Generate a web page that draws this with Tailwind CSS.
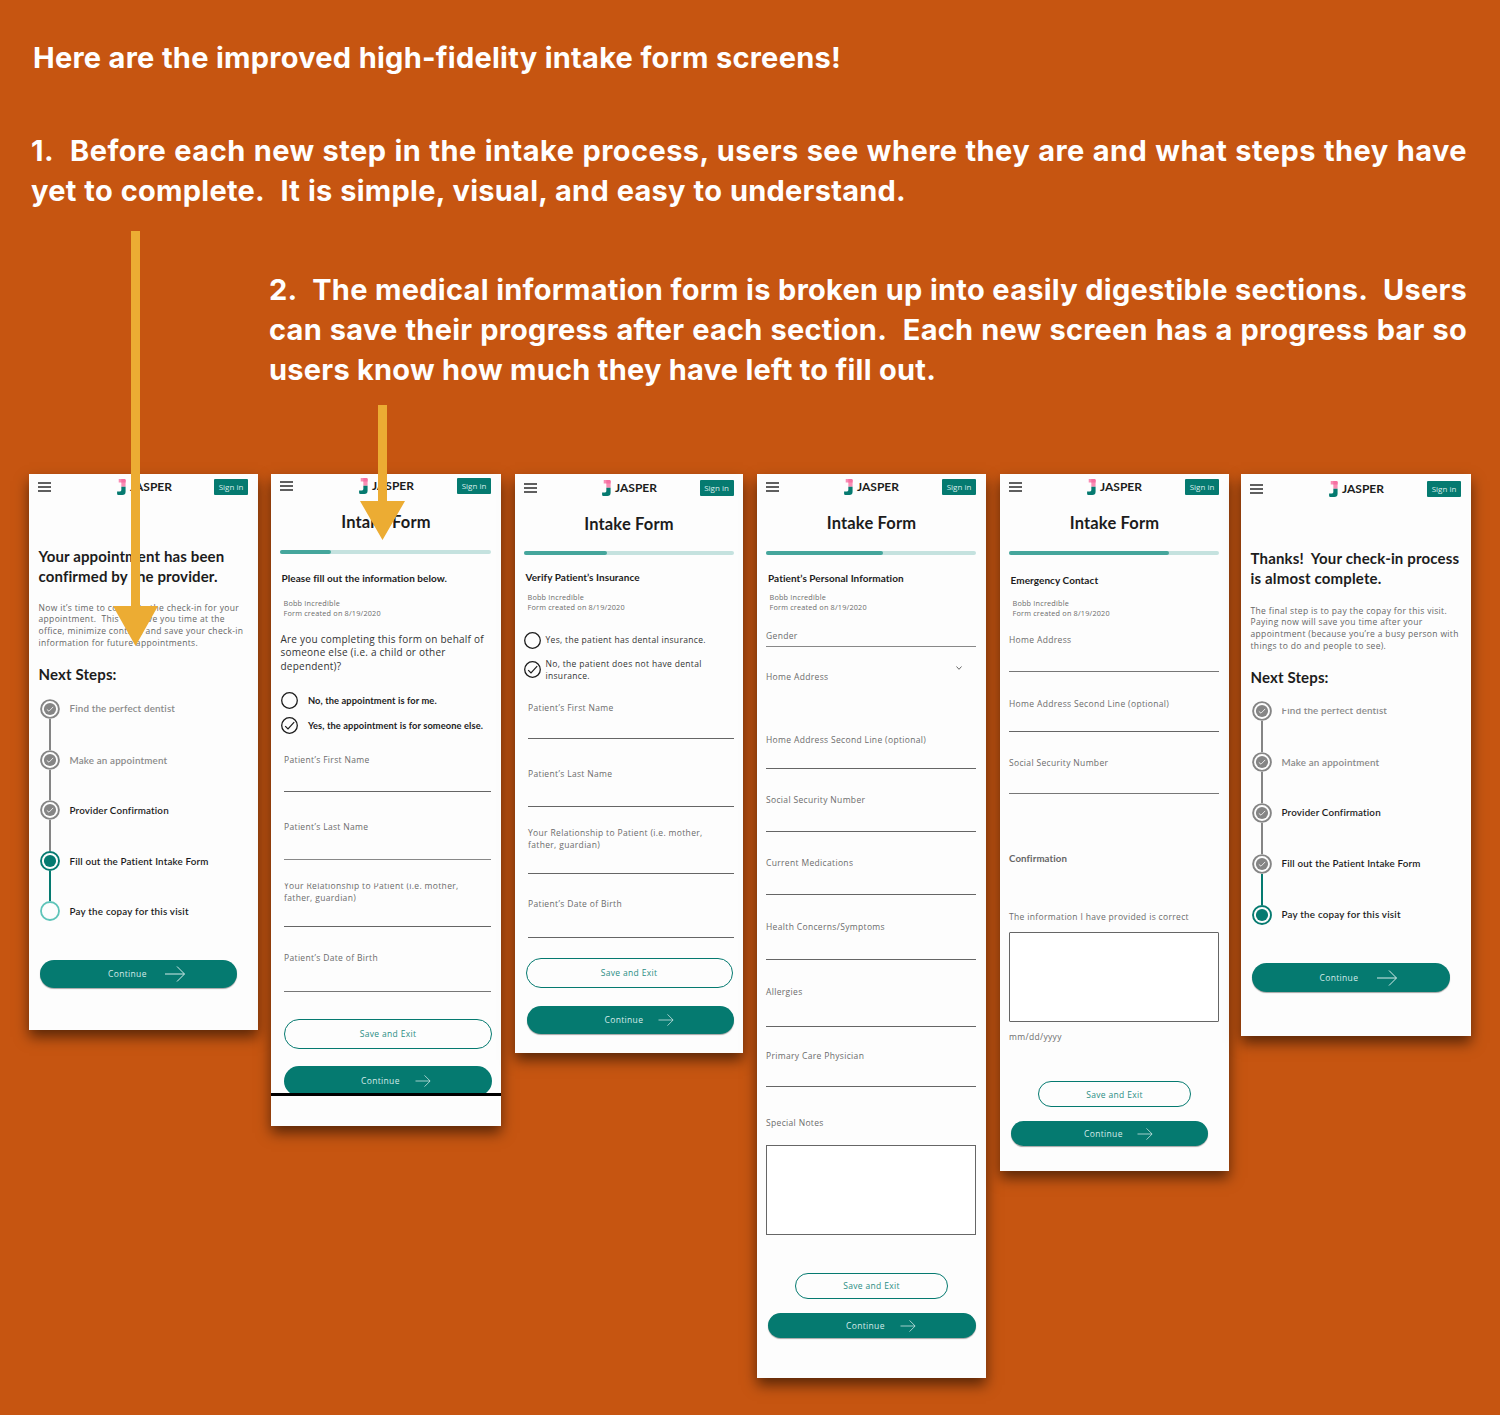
<!DOCTYPE html>
<html lang="en">
<head>
<meta charset="utf-8">
<title>Intake form screens</title>
<script src="https://cdn.jsdelivr.net/npm/@tailwindcss/browser@4"></script>
</head>
<body class="bg-[#c65511]">
<svg class="hidden">
  <symbol id="menu" viewBox="0 0 13 10"><path d="M0 1h13M0 5h13M0 9h13" stroke="#2b2b2b" stroke-width="1.3"/></symbol>
  <symbol id="logo" viewBox="0 0 27 49">
    <path d="M5 0H22Q26 0 26 4V24H13V11H5Z" fill="#f98db4"/><path d="M13 0H22Q26 0 26 4V11H13Z" fill="#f670a2"/>
    <path d="M13 24H26V39Q26 49 16 49H4Q0 49 0 45V38H9Q13 38 13 34Z" fill="#057a70"/>
  </symbol>
  <symbol id="arrow" viewBox="0 0 20 16"><path d="M0 8H19.3M12 .5L19.5 8L12 15.5" fill="none" stroke="#d5ebe9" stroke-width="1"/></symbol>
  <symbol id="radio" viewBox="0 0 17 17"><circle cx="8.5" cy="8.5" r="7.8" fill="none" stroke="#1c1c1c" stroke-width="1.3"/></symbol>
  <symbol id="radio-on" viewBox="0 0 17 17"><circle cx="8.5" cy="8.5" r="7.8" fill="none" stroke="#1c1c1c" stroke-width="1.3"/><path d="M4.2 9.2L7 12L13.2 5.2" fill="none" stroke="#1c1c1c" stroke-width="1.2"/></symbol>
  <symbol id="step-done" viewBox="0 0 20 20"><circle cx="10" cy="10" r="8.9" fill="#fdfdfd" stroke="#858585" stroke-width="1.9"/><circle cx="10" cy="10" r="6.1" fill="#858585"/><path d="M6.8 10.4L9 12.2L13.2 7.9" fill="none" stroke="#e8e8e8" stroke-width="1"/></symbol>
  <symbol id="step-now" viewBox="0 0 20 20"><circle cx="10" cy="10" r="9" fill="#fdfdfd" stroke="#057a70" stroke-width="1.9"/><circle cx="10" cy="10" r="6.1" fill="#057a70"/></symbol>
  <symbol id="step-next" viewBox="0 0 20 20"><circle cx="10" cy="10" r="9" fill="#fdfdfd" stroke="#5ec4b9" stroke-width="1.8"/></symbol>
</svg>

<main class="relative w-[1500px] h-[1415px] overflow-hidden font-['Open_Sans',sans-serif]">
  <section class="h-[474px] pt-[38px] text-white font-['Inter',sans-serif] font-bold text-[29px] leading-[40px] tracking-[0.25px] whitespace-nowrap [text-align-last:justify]">
    <h1 class="ml-[33px] w-[808px]">Here are the improved high-fidelity intake form screens!</h1>
    <div class="ml-[31px] mt-[53px]">
      <p class="w-[1436px] tracking-[0.45px]">1.&nbsp; Before each new step in the intake process, users see where they are and what steps they have</p>
      <p class="w-[875px]">yet to complete.&nbsp; It is simple, visual, and easy to understand.</p>
    </div>
    <div class="ml-[269px] mt-[59px]">
      <p class="w-[1198px]">2.&nbsp; The medical information form is broken up into easily digestible sections.&nbsp; Users</p>
      <p class="w-[1198px]">can save their progress after each section.&nbsp; Each new screen has a progress bar so</p>
      <p class="w-[666px]">users know how much they have left to fill out.</p>
    </div>
  </section>

  <section class="flex items-start pl-[29px]">

    <!-- Appointment confirmed -->
    <article class="w-[229px] h-[556px] bg-[#fdfdfd] shadow-[0_7px_13px_rgba(0,0,0,0.55)] flex flex-col shrink-0">
      <header class="mt-[5px] ml-[9px] mr-[10px] h-4 flex items-center">
        <svg class="w-[13px] h-[10px]"><use href="#menu"/></svg>
        <svg class="w-[9px] h-4 ml-[66px]"><use href="#logo"/></svg>
        <span class="ml-[4px] font-['Lato',sans-serif] font-bold text-[12px] leading-4 text-[#1c1c1c]">JASPER</span>
        <span class="ml-auto w-[34px] h-4 rounded-[1px] bg-[#057a70] text-[8px] leading-4 text-[#d9eeec] text-center">Sign in</span>
      </header>
      <h2 class="mt-[50.5px] ml-[9.5px] h-[41.6px] font-['Lato',sans-serif] font-bold text-[15px] tracking-[0.13px] leading-[20.3px] text-[#1c1c1c] whitespace-pre">Your appointment has been<br>confirmed by the provider.</h2>
      <p class="mt-[14.7px] ml-[9.5px] h-[46.7px] text-[8.5px] leading-[11.67px] tracking-[0.34px] text-[#666] whitespace-pre">Now it’s time to complete the check-in for your<br>appointment.  This will save you time at the<br>office, minimize contact, and save your check-in<br>information for future appointments.</p>
      <h3 class="mt-[16px] ml-[9.5px] h-5 font-['Lato',sans-serif] font-bold text-[15px] tracking-[0.13px] leading-5 text-[#1c1c1c]">Next Steps:</h3>
      <ol class="mt-[14.5px] ml-[10.5px] font-['Lato',sans-serif] font-semibold text-[9.8px] tracking-[0.16px] leading-[21px] text-[#1c1c1c]">
        <li class="flex h-[50.6px] leading-[19px]"><div class="w-5 flex flex-col items-center"><svg class="size-5 shrink-0"><use href="#step-done"/></svg><i class="w-[2px] flex-1 bg-[#858585]"></i></div><span class="ml-[10px] h-5 text-[#8a8a8a] [clip-path:inset(0_0_6.5px_0)]">Find the perfect dentist</span></li>
        <li class="flex h-[50.6px]"><div class="w-5 flex flex-col items-center"><svg class="size-5 shrink-0"><use href="#step-done"/></svg><i class="w-[2px] flex-1 bg-[#858585]"></i></div><span class="ml-[10px] text-[#8a8a8a]">Make an appointment</span></li>
        <li class="flex h-[50.6px]"><div class="w-5 flex flex-col items-center"><svg class="size-5 shrink-0"><use href="#step-done"/></svg><i class="w-[2px] flex-1 bg-[#858585]"></i></div><span class="ml-[10px]">Provider Confirmation</span></li>
        <li class="flex h-[50.6px]"><div class="w-5 flex flex-col items-center"><svg class="size-5 shrink-0"><use href="#step-now"/></svg><i class="w-[2px] flex-1 bg-[#057a70]"></i></div><span class="ml-[10px]">Fill out the Patient Intake Form</span></li>
        <li class="flex h-5 tracking-[0.22px]"><svg class="size-5 shrink-0"><use href="#step-next"/></svg><span class="ml-[10px]">Pay the copay for this visit</span></li>
      </ol>
      <div class="mt-[39px] ml-[11px] w-[197px] h-[28px] rounded-full bg-[#057a70] shadow-[0_1px_1px_rgba(0,0,0,0.35)] flex items-center text-[8.5px] tracking-[0.34px] text-[#d5ebe9]"><span class="ml-[68px]">Continue</span><svg class="w-5 h-4 ml-[18px]"><use href="#arrow"/></svg></div>
    </article>

    <!-- Intake form, part 1 -->
    <article class="ml-[13px] w-[230px] h-[652px] bg-[#fdfdfd] shadow-[0_7px_13px_rgba(0,0,0,0.55)] flex flex-col shrink-0">
      <header class="mt-[4px] ml-[9px] mr-[10px] h-4 flex items-center">
        <svg class="w-[13px] h-[10px]"><use href="#menu"/></svg>
        <svg class="w-[9px] h-4 ml-[66px]"><use href="#logo"/></svg>
        <span class="ml-[4px] font-['Lato',sans-serif] font-bold text-[12px] leading-4 text-[#1c1c1c]">JASPER</span>
        <span class="ml-auto w-[34px] h-4 rounded-[1px] bg-[#057a70] text-[8px] leading-4 text-[#d9eeec] text-center">Sign in</span>
      </header>
      <h2 class="mt-[17.5px] h-5 text-center font-['Lato',sans-serif] font-bold text-[16.5px] tracking-[0.15px] leading-5 text-[#1c1c1c]">Intake Form</h2>
      <div class="mt-[18px] ml-[9px] w-[211px] h-[4.5px] rounded-full bg-[#c5e2df]"><div class="w-[51px] h-full rounded-full bg-[#45a69c]"></div></div>
      <h3 class="mt-[18px] ml-[10.5px] h-3 font-['Lato',sans-serif] font-bold text-[10px] tracking-[0.06px] leading-3 text-[#1c1c1c]">Please fill out the information below.</h3>
      <p class="mt-[14px] ml-[12.5px] h-5 text-[7.3px] leading-[10px] tracking-[0.18px] text-[#6c6c6c]">Bobb Incredible<br>Form created on 8/19/2020</p>
      <p class="mt-[14.5px] ml-[9.5px] h-[40.8px] text-[10px] leading-[13.6px] tracking-[0.23px] text-[#333]">Are you completing this form on behalf of<br>someone else (i.e. a child or other<br>dependent)?</p>
      <div class="mt-[18.5px] ml-[10.3px] h-[17px] flex items-center font-['Lato',sans-serif] font-bold text-[9.3px] tracking-[0.1px] leading-[17px] text-[#1c1c1c]"><svg class="size-[17px] mr-[9.7px]"><use href="#radio"/></svg>No, the appointment is for me.</div>
      <div class="mt-[7.8px] ml-[10.3px] h-[17px] flex items-center font-['Lato',sans-serif] font-bold text-[9.3px] tracking-[0.1px] leading-[17px] text-[#1c1c1c]"><svg class="size-[17px] mr-[9.7px]"><use href="#radio-on"/></svg>Yes, the appointment is for someone else.</div>
      <div class="ml-[13px] mr-[10px] text-[8.5px] leading-[11.6px] tracking-[0.34px] text-[#6c6c6c]">
        <div class="mt-[20.7px] h-[38px] border-b border-[#666]">Patient’s First Name</div>
        <div class="mt-[29px] h-[39px] border-b border-[#888]">Patient’s Last Name</div>
        <div class="mt-[20px] h-[46.5px] border-b border-[#666]"><p class="[clip-path:inset(3px_0_0_0)]">Your Relationship to Patient (i.e. mother,<br>father, guardian)</p></div>
        <div class="mt-[25.5px] h-[40px] border-b border-[#777]">Patient’s Date of Birth</div>
      </div>
      <div class="mt-[26.5px] ml-[13px] w-[208px] h-[30px] shrink-0 rounded-full border-[1.5px] border-[#057a70] text-[8.5px] leading-[28px] tracking-[0.34px] text-[#2b8d84] text-center">Save and Exit</div>
      <div class="mt-[17px] h-[27px] shrink-0 overflow-hidden"><div class="ml-[12.5px] w-[208px] h-[30px] rounded-full bg-[#057a70] flex items-center text-[8.5px] tracking-[0.34px] text-[#d5ebe9]"><span class="ml-[77.5px] pt-[2px]">Continue</span><svg class="w-4 h-[12px] ml-[15px]"><use href="#arrow"/></svg></div></div>
      <div class="h-[3px] shrink-0 bg-black"></div>
    </article>

    <!-- Intake form, part 2 -->
    <article class="ml-[14px] w-[228px] h-[579px] bg-[#fdfdfd] shadow-[0_7px_13px_rgba(0,0,0,0.55)] flex flex-col shrink-0">
      <header class="mt-[6px] ml-[9px] mr-[9.5px] h-4 flex items-center">
        <svg class="w-[13px] h-[10px]"><use href="#menu"/></svg>
        <svg class="w-[9px] h-4 ml-[65px]"><use href="#logo"/></svg>
        <span class="ml-[4px] font-['Lato',sans-serif] font-bold text-[12px] leading-4 text-[#1c1c1c]">JASPER</span>
        <span class="ml-auto w-[34px] h-4 rounded-[1px] bg-[#057a70] text-[8px] leading-4 text-[#d9eeec] text-center">Sign in</span>
      </header>
      <h2 class="mt-[17.5px] h-5 text-center font-['Lato',sans-serif] font-bold text-[16.5px] tracking-[0.15px] leading-5 text-[#1c1c1c]">Intake Form</h2>
      <div class="mt-[17px] ml-[9px] w-[210px] h-[4.5px] rounded-full bg-[#c5e2df]"><div class="w-[83px] h-full rounded-full bg-[#45a69c]"></div></div>
      <h3 class="mt-[15.8px] ml-[10.5px] h-3 font-['Lato',sans-serif] font-bold text-[10px] tracking-[0.06px] leading-3 text-[#1c1c1c]">Verify Patient’s Insurance</h3>
      <p class="mt-[9.5px] ml-[12.5px] h-5 text-[7.3px] leading-[10px] tracking-[0.18px] text-[#6c6c6c]">Bobb Incredible<br>Form created on 8/19/2020</p>
      <div class="mt-[19px] ml-[9px] h-[18px] flex items-center text-[8.5px] leading-[11.7px] tracking-[0.32px] text-[#333]"><svg class="size-[17px] mr-[4.5px]"><use href="#radio"/></svg>Yes, the patient has dental insurance.</div>
      <div class="mt-[8.5px] ml-[9px] h-[24px] flex items-center text-[8.5px] leading-[11.7px] tracking-[0.32px] text-[#333]"><svg class="size-[17px] mr-[4.5px] shrink-0"><use href="#radio-on"/></svg><p>No, the patient does not have dental<br>insurance.</p></div>
      <div class="ml-[13px] mr-[9.5px] text-[8.5px] leading-[11.6px] tracking-[0.34px] text-[#6c6c6c]">
        <div class="mt-[20px] h-[37px] border-b border-[#666]">Patient’s First Name</div>
        <div class="mt-[29.5px] h-[38.5px] border-b border-[#666]">Patient’s Last Name</div>
        <div class="mt-[20.5px] h-[46.5px] border-b border-[#666]">Your Relationship to Patient (i.e. mother,<br>father, guardian)</div>
        <div class="mt-[24.5px] h-[39.5px] border-b border-[#666]">Patient’s Date of Birth</div>
      </div>
      <div class="mt-[20px] ml-[10.5px] w-[207px] h-[30px] shrink-0 rounded-full border-[1.5px] border-[#057a70] text-[8.5px] leading-[28px] tracking-[0.34px] text-[#2b8d84] text-center">Save and Exit</div>
      <div class="mt-[18px] ml-[12px] w-[207px] h-[28px] shrink-0 rounded-full bg-[#057a70] shadow-[0_1px_1px_rgba(0,0,0,0.35)] flex items-center text-[8.5px] tracking-[0.34px] text-[#d5ebe9]"><span class="ml-[77.5px] pt-[2px]">Continue</span><svg class="w-4 h-[12px] ml-[15px]"><use href="#arrow"/></svg></div>
    </article>

    <!-- Intake form, part 3 -->
    <article class="ml-[14px] w-[229px] h-[904px] bg-[#fdfdfd] shadow-[0_7px_13px_rgba(0,0,0,0.55)] flex flex-col shrink-0">
      <header class="mt-[5px] ml-[9px] mr-[10px] h-4 flex items-center">
        <svg class="w-[13px] h-[10px]"><use href="#menu"/></svg>
        <svg class="w-[9px] h-4 ml-[65px]"><use href="#logo"/></svg>
        <span class="ml-[4px] font-['Lato',sans-serif] font-bold text-[12px] leading-4 text-[#1c1c1c]">JASPER</span>
        <span class="ml-auto w-[34px] h-4 rounded-[1px] bg-[#057a70] text-[8px] leading-4 text-[#d9eeec] text-center">Sign in</span>
      </header>
      <h2 class="mt-[18px] h-5 text-center font-['Lato',sans-serif] font-bold text-[16.5px] tracking-[0.15px] leading-[21px] text-[#1c1c1c]">Intake Form</h2>
      <div class="mt-[17.7px] ml-[9px] w-[210px] h-[4.5px] rounded-full bg-[#c5e2df]"><div class="w-[117px] h-full rounded-full bg-[#45a69c]"></div></div>
      <h3 class="mt-[16.8px] ml-[11px] h-3 font-['Lato',sans-serif] font-bold text-[10px] tracking-[0.06px] leading-3 text-[#1c1c1c]">Patient’s Personal Information</h3>
      <p class="mt-[8px] ml-[12.5px] h-5 text-[7.3px] leading-[10px] tracking-[0.18px] text-[#6c6c6c]">Bobb Incredible<br>Form created on 8/19/2020</p>
      <div class="ml-[9px] mr-[10px] text-[8.5px] leading-[11.6px] tracking-[0.34px] text-[#6c6c6c]">
        <div class="mt-[18.2px] h-[16.5px] border-b border-[#888]">Gender</div>
        <div class="mt-[19px] h-1 flex justify-end pr-[14px]"><svg class="w-[6px] h-[4px]" viewBox="0 0 6 4"><path d="M.5 .5L3 3.3L5.5 .5" fill="none" stroke="#666"/></svg></div>
        <div class="mt-[1px] h-[12px]">Home Address</div>
        <div class="mt-[51px] h-[35px] border-b border-[#666]">Home Address Second Line (optional)</div>
        <div class="mt-[25.5px] h-[37.5px] border-b border-[#666]">Social Security Number</div>
        <div class="mt-[25px] h-[38.5px] border-b border-[#666]">Current Medications</div>
        <div class="mt-[25.5px] h-[39.5px] border-b border-[#666]">Health Concerns/Symptoms</div>
        <div class="mt-[25.5px] h-[41px] border-b border-[#666]">Allergies</div>
        <div class="mt-[23px] h-[37.5px] border-b border-[#666]">Primary Care Physician</div>
        <div class="mt-[30px] h-[12px]">Special Notes</div>
        <div class="mt-[16px] h-[90px] border border-[#666] bg-white"></div>
      </div>
      <div class="mt-[38px] ml-[38px] w-[153px] h-[26px] shrink-0 rounded-full border-[1.5px] border-[#057a70] text-[8.5px] leading-[24px] tracking-[0.34px] text-[#2b8d84] text-center">Save and Exit</div>
      <div class="mt-[14px] ml-[11px] w-[208px] h-[25px] shrink-0 rounded-full bg-[#057a70] shadow-[0_1px_1px_rgba(0,0,0,0.35)] flex items-center text-[8.5px] tracking-[0.34px] text-[#d5ebe9]"><span class="ml-[78px] pt-px">Continue</span><svg class="w-4 h-[12px] ml-[15px]"><use href="#arrow"/></svg></div>
    </article>

    <!-- Intake form, part 4 -->
    <article class="ml-[14px] w-[229px] h-[697px] bg-[#fdfdfd] shadow-[0_7px_13px_rgba(0,0,0,0.55)] flex flex-col shrink-0">
      <header class="mt-[5px] ml-[9px] mr-[10px] h-4 flex items-center">
        <svg class="w-[13px] h-[10px]"><use href="#menu"/></svg>
        <svg class="w-[9px] h-4 ml-[65px]"><use href="#logo"/></svg>
        <span class="ml-[4px] font-['Lato',sans-serif] font-bold text-[12px] leading-4 text-[#1c1c1c]">JASPER</span>
        <span class="ml-auto w-[34px] h-4 rounded-[1px] bg-[#057a70] text-[8px] leading-4 text-[#d9eeec] text-center">Sign in</span>
      </header>
      <h2 class="mt-[18px] h-5 text-center font-['Lato',sans-serif] font-bold text-[16.5px] tracking-[0.15px] leading-[21px] text-[#1c1c1c]">Intake Form</h2>
      <div class="mt-[17.7px] ml-[9px] w-[210px] h-[4.5px] rounded-full bg-[#c5e2df]"><div class="w-[160px] h-full rounded-full bg-[#45a69c]"></div></div>
      <h3 class="mt-[19.3px] ml-[10.5px] h-3 font-['Lato',sans-serif] font-bold text-[10px] tracking-[0.06px] leading-3 text-[#1c1c1c]">Emergency Contact</h3>
      <p class="mt-[12px] ml-[12.5px] h-5 text-[7.3px] leading-[10px] tracking-[0.18px] text-[#6c6c6c]">Bobb Incredible<br>Form created on 8/19/2020</p>
      <div class="ml-[9px] mr-[10px] text-[8.5px] leading-[11.6px] tracking-[0.34px] text-[#6c6c6c]">
        <div class="mt-[15.5px] h-[38.5px] border-b border-[#777]">Home Address</div>
        <div class="mt-[26px] h-[33.5px] border-b border-[#666]">Home Address Second Line (optional)</div>
        <div class="mt-[25.5px] h-[37px] border-b border-[#777]">Social Security Number</div>
        <div class="mt-[59px] h-[12px] font-['Lato',sans-serif] font-bold text-[9.7px] tracking-[0.1px] text-[#666]">Confirmation</div>
        <div class="mt-[45.5px] h-[12px]">The information I have provided is correct</div>
        <div class="mt-[9px] h-[90px] rounded-[1px] border border-[#666] bg-white"></div>
        <div class="mt-[9.5px] h-[12px]">mm/dd/yyyy</div>
      </div>
      <div class="mt-[38px] ml-[38px] w-[153px] h-[26px] shrink-0 rounded-full border-[1.5px] border-[#057a70] text-[8.5px] leading-[25px] tracking-[0.34px] text-[#2b8d84] text-center">Save and Exit</div>
      <div class="mt-[14px] ml-[11px] w-[197px] h-[25px] shrink-0 rounded-full bg-[#057a70] shadow-[0_1px_1px_rgba(0,0,0,0.35)] flex items-center text-[8.5px] tracking-[0.34px] text-[#d5ebe9]"><span class="ml-[73px]">Continue</span><svg class="w-4 h-[12px] ml-[14px]"><use href="#arrow"/></svg></div>
    </article>

    <!-- Check-in almost complete -->
    <article class="ml-[12px] w-[230px] h-[562px] bg-[#fdfdfd] shadow-[0_7px_13px_rgba(0,0,0,0.55)] flex flex-col shrink-0">
      <header class="mt-[6.5px] ml-[9px] mr-[10px] h-4 flex items-center">
        <svg class="w-[13px] h-[10px]"><use href="#menu"/></svg>
        <svg class="w-[9px] h-4 ml-[66px]"><use href="#logo"/></svg>
        <span class="ml-[4px] font-['Lato',sans-serif] font-bold text-[12px] leading-4 text-[#1c1c1c]">JASPER</span>
        <span class="ml-auto w-[34px] h-4 rounded-[1px] bg-[#057a70] text-[8px] leading-4 text-[#d9eeec] text-center">Sign in</span>
      </header>
      <h2 class="mt-[51.5px] ml-[9.5px] h-[41.6px] font-['Lato',sans-serif] font-bold text-[15px] tracking-[0.16px] leading-[20.3px] text-[#1c1c1c] whitespace-pre">Thanks!  Your check-in process<br>is almost complete.</h2>
      <p class="mt-[15px] ml-[9.5px] h-[46.7px] text-[8.5px] leading-[11.67px] tracking-[0.34px] text-[#666] whitespace-pre">The final step is to pay the copay for this visit.<br>Paying now will save you time after your<br>appointment (because you’re a busy person with<br>things to do and people to see).</p>
      <h3 class="mt-[16px] ml-[9.5px] h-5 font-['Lato',sans-serif] font-bold text-[15px] tracking-[0.13px] leading-5 text-[#1c1c1c]">Next Steps:</h3>
      <ol class="mt-[13.5px] ml-[10.5px] font-['Lato',sans-serif] font-semibold text-[9.8px] tracking-[0.16px] leading-5 text-[#1c1c1c]">
        <li class="flex h-[51px] leading-[19px]"><div class="w-5 flex flex-col items-center"><svg class="size-5 shrink-0"><use href="#step-done"/></svg><i class="w-[2px] flex-1 bg-[#858585]"></i></div><span class="ml-[10px] h-5 text-[#8a8a8a] [clip-path:inset(7.5px_0_0_0)]">Find the perfect dentist</span></li>
        <li class="flex h-[51px] leading-[21px]"><div class="w-5 flex flex-col items-center"><svg class="size-5 shrink-0"><use href="#step-done"/></svg><i class="w-[2px] flex-1 bg-[#858585]"></i></div><span class="ml-[10px] text-[#8a8a8a]">Make an appointment</span></li>
        <li class="flex h-[51px] leading-[19px]"><div class="w-5 flex flex-col items-center"><svg class="size-5 shrink-0"><use href="#step-done"/></svg><i class="w-[2px] flex-1 bg-[#858585]"></i></div><span class="ml-[10px]">Provider Confirmation</span></li>
        <li class="flex h-[51px] leading-[19px]"><div class="w-5 flex flex-col items-center"><svg class="size-5 shrink-0"><use href="#step-done"/></svg><i class="w-[2px] flex-1 bg-[#057a70]"></i></div><span class="ml-[10px]">Fill out the Patient Intake Form</span></li>
        <li class="flex h-5 leading-[19px] tracking-[0.22px]"><svg class="size-5 shrink-0"><use href="#step-now"/></svg><span class="ml-[10px]">Pay the copay for this visit</span></li>
      </ol>
      <div class="mt-[38.5px] ml-[11px] w-[198px] h-[28.5px] rounded-full bg-[#057a70] shadow-[0_1px_1px_rgba(0,0,0,0.35)] flex items-center text-[8.5px] tracking-[0.34px] text-[#d5ebe9]"><span class="ml-[67.5px] pt-px">Continue</span><svg class="w-5 h-4 ml-[18.5px]"><use href="#arrow"/></svg></div>
    </article>
  </section>

  <!-- Arrows pointing from the notes to the screens -->
  <svg class="absolute left-[113px] top-[231px] w-[45px] h-[415px]" viewBox="0 0 45 415"><path d="M18 0H27V375H45L22.5 415L0 375H18Z" fill="#ecac33"/></svg>
  <svg class="absolute left-[360px] top-[405px] w-[45px] h-[135px]" viewBox="0 0 45 135"><path d="M18 0H27V96H45L22.5 135L0 96H18Z" fill="#ecac33"/></svg>
</main>
</body>
</html>
